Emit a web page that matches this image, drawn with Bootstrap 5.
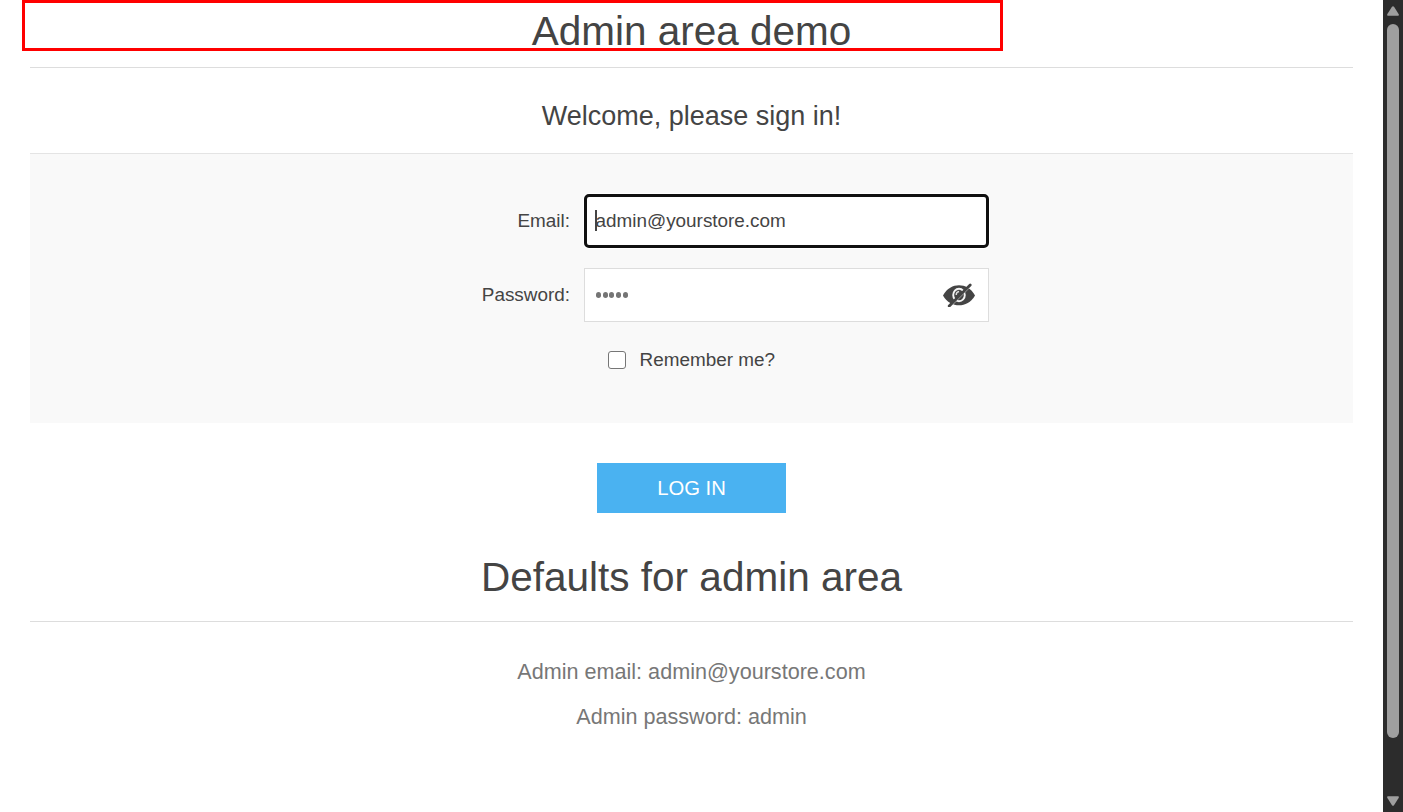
<!DOCTYPE html>
<html lang="en">
<head>
<meta charset="utf-8">
<meta name="viewport" content="width=device-width, initial-scale=1">
<title>Admin area demo</title>
<link href="https://cdn.jsdelivr.net/npm/bootstrap@5.3.0/dist/css/bootstrap.min.css" rel="stylesheet">
<style>
body{font-family:"Liberation Sans",Arial,sans-serif;color:#444;font-size:18.9px;line-height:22px;background:#fff}
.page-main{padding:0 30px}
.page-title{font-size:40.5px;line-height:46px;font-weight:400;border-bottom:1px solid #ddd;color:#444}
.top-title{padding:8px 0 13px}
.highlight-box{left:22px;top:0;width:981px;height:51px;border:3px solid red;pointer-events:none}
.form-title{font-size:27px;line-height:32px;font-weight:400;padding:32px 0 21px}
.login-panel{height:270px;background:#f9f9f9;border-top:1px solid #e4e4e4;padding-top:40px}
.field-row{display:grid;grid-template-columns:540px 405px;column-gap:14px;margin-bottom:20px}
.field-box{height:54px;border:1px solid #ddd;background:#fff;padding:0 13px 0 11px}
.field-box.focused{border:3px solid #101010;border-radius:5px;padding-left:8.5px;box-shadow:0 0 0 1px #fff}
.text-caret{left:8px;top:13px;width:2px;height:21px;background:#444}
.dots i{width:5px;height:5.4px;border-radius:50%;background:#757575;margin-right:1.7px}
.remember{margin-left:578px;margin-top:27px;gap:14px}
.remember .form-check-input{width:17.5px;height:17.5px;border:1px solid #767676;border-radius:3px;background:#fff}
.login-btn{width:189px;height:50px;margin-top:40px;background:#4ab2f1;border:0;border-radius:0;color:#fff;font-size:20.25px;padding:0;line-height:50px}
.second-title{margin-top:41px;padding-bottom:21px}
.defaults{font-size:21.6px;line-height:25px;color:#777;margin-top:37px}
.defaults p{margin-bottom:20px}
.scroll-track{width:20px;background:#2c2c2c;padding:6px 0}
.scroll-thumb{width:12px;height:714px;border-radius:6px;background:#9f9f9f;margin-top:8px}
</style>
</head>
<body>
<div class="d-flex vh-100 overflow-hidden position-relative">
  <main class="page-main flex-grow-1 text-center">
    <h1 class="page-title top-title mb-0">Admin area demo</h1>
    <h2 class="form-title mb-0">Welcome, please sign in!</h2>
    <form class="login-panel">
      <div class="field-row align-items-center">
        <label class="text-end">Email:</label>
        <div class="field-box focused d-flex align-items-center position-relative"><span class="text-caret position-absolute"></span><span>admin@yourstore.com</span></div>
      </div>
      <div class="field-row align-items-center">
        <label class="text-end">Password:</label>
        <div class="field-box d-flex align-items-center justify-content-between">
          <span class="dots d-flex"><i></i><i></i><i></i><i></i><i></i></span>
          <svg width="32" height="24" viewBox="0 0 32 24" aria-label="Show password">
            <path d="M0 12.4C4 5.2 10 2.2 16 2.2s12 3 16 10.2c-4 7-10 9.8-16 9.8S4 19.4 0 12.4Z" fill="#444"/>
            <ellipse cx="16" cy="12" rx="5.8" ry="6.3" fill="none" stroke="#f4f4f4" stroke-width="1.9"/>
            <path d="M13.2 12c0-2.1 1-3.3 2.9-3.5" fill="none" stroke="#ddd" stroke-width="1.4"/>
            <path d="M8 22.7 28.8 1.8" stroke="#fff" stroke-width="1.3"/>
            <path d="M6.2 23.1 27.2 2" stroke="#444" stroke-width="2.8" stroke-linecap="round"/>
          </svg>
        </div>
      </div>
      <div class="remember d-flex align-items-center">
        <input class="form-check-input m-0" type="checkbox" id="remember">
        <label for="remember">Remember me?</label>
      </div>
    </form>
    <button type="button" class="btn login-btn d-block mx-auto">LOG IN</button>
    <h1 class="page-title second-title mb-0">Defaults for admin area</h1>
    <div class="defaults">
      <p>Admin email: admin@yourstore.com</p>
      <p>Admin password: admin</p>
    </div>
  </main>
  <aside class="scroll-track d-flex flex-column align-items-center flex-shrink-0">
    <svg class="flex-shrink-0" width="12" height="10" viewBox="0 0 12 10"><path d="M5 .8Q6-.4 7 .8L11.6 8Q12.4 9.8 11 9.8H1Q-.4 9.8.4 8Z" fill="#9f9f9f"/></svg>
    <div class="scroll-thumb flex-shrink-0"></div>
    <svg class="flex-shrink-0 mt-auto" width="12" height="10" viewBox="0 0 12 10"><path d="M5 9.2Q6 10.4 7 9.2L11.6 2Q12.4.2 11 .2H1Q-.4.2.4 2Z" fill="#9f9f9f"/></svg>
  </aside>
  <div class="highlight-box position-absolute"></div>
</div>
<script src="https://cdn.jsdelivr.net/npm/bootstrap@5.3.0/dist/js/bootstrap.bundle.min.js"></script>
</body>
</html>
